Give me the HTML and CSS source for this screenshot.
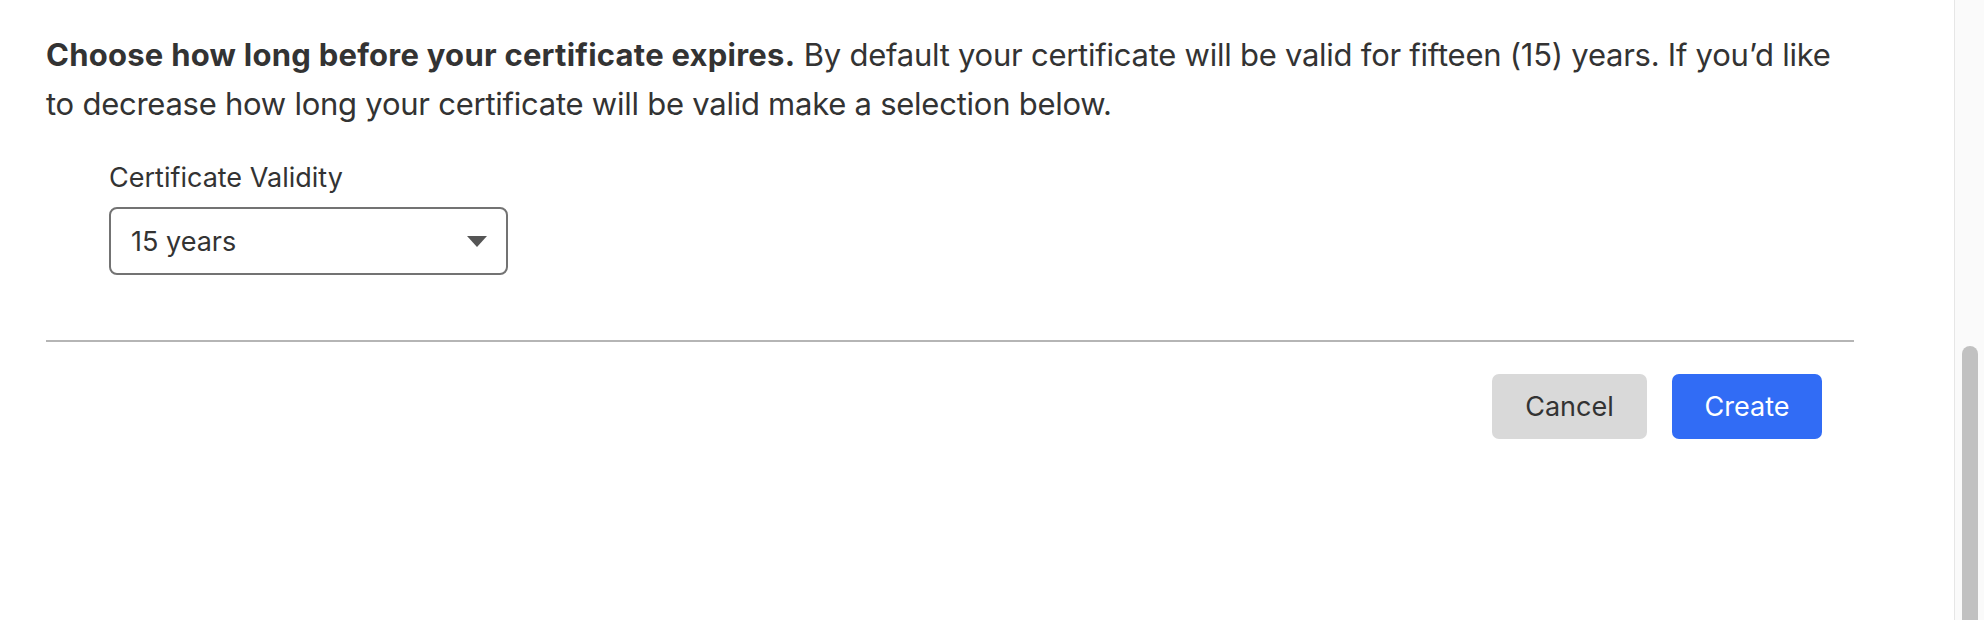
FILE: index.html
```html
<!DOCTYPE html>
<html lang="en">
<head>
<meta charset="utf-8">
<title>Certificate Validity</title>
<link rel="stylesheet" href="styles.css">
</head>
<body>
<div class="layout">
  <main class="content">
    <p class="intro"><strong>Choose how long before your certificate expires.</strong> By default your certificate will be valid for fifteen (15) years. If you’d like to decrease how long your certificate will be valid make a selection below.</p>
    <div class="field">
      <label class="field-label" for="validity">Certificate Validity</label>
      <div class="select" id="validity">
        <span class="select-value">15 years</span>
        <svg class="select-arrow" width="20" height="11" viewBox="0 0 20 11"><path d="M0 0H20L10 11Z" fill="#555"/></svg>
      </div>
    </div>
    <hr class="divider">
    <div class="actions">
      <button class="btn btn-secondary">Cancel</button>
      <button class="btn btn-primary">Create</button>
    </div>
  </main>
  <aside class="scrollbar"><div class="scrollbar-thumb"></div></aside>
</div>
</body>
</html>
```

FILE: styles.css
```css
* { box-sizing: border-box; }
html, body { margin: 0; padding: 0; background: #fff; }
body {
  font-family: Inter, "Noto Sans", sans-serif;
  color: #333;
  width: 1984px;
  height: 620px;
  overflow: hidden;
}
.layout {
  display: flex;
  height: 620px;
}
.content {
  flex: 1;
  padding-left: 46px;
}
.intro {
  width: 1808px;
  margin: 30px 0 0;
  font-size: 31px;
  line-height: 49px;
  letter-spacing: -0.25px;
  color: #333;
}
.intro strong { font-weight: 700; letter-spacing: 0.25px; }
.field {
  margin: 33px 0 0 63px;
  display: flex;
  flex-direction: column;
}
.field-label {
  font-size: 27px;
  line-height: 34px;
  color: #333;
}
.select {
  margin-top: 12px;
  width: 399px;
  height: 68px;
  border: 2px solid #737373;
  border-radius: 8px;
  display: flex;
  align-items: center;
  justify-content: space-between;
  padding: 0 19px 0 20px;
  font-size: 27px;
  color: #333;
}
.divider {
  width: 1808px;
  margin: 65px 0 0;
  border: 0;
  height: 2px;
  background: #b5b5b5;
}
.actions {
  width: 1808px;
  display: flex;
  justify-content: flex-end;
  gap: 25px;
  padding-right: 32px;
  margin-top: 32px;
}
.btn {
  height: 65px;
  border: 0;
  border-radius: 7px;
  font-family: Inter, "Noto Sans", sans-serif;
  font-size: 27px;
  padding: 0;
}
.btn-secondary { background: #d9d9d9; color: #333; width: 155px; }
.btn-primary { background: #316cf5; color: #fff; width: 150px; }
.scrollbar {
  width: 30px;
  border-left: 1px solid #e6e6e6;
  background: #fafafa;
  padding-left: 7px;
}
.scrollbar-thumb {
  margin-top: 346px;
  width: 16px;
  height: 300px;
  border-radius: 8px;
  background: #c1c1c1;
}
```
